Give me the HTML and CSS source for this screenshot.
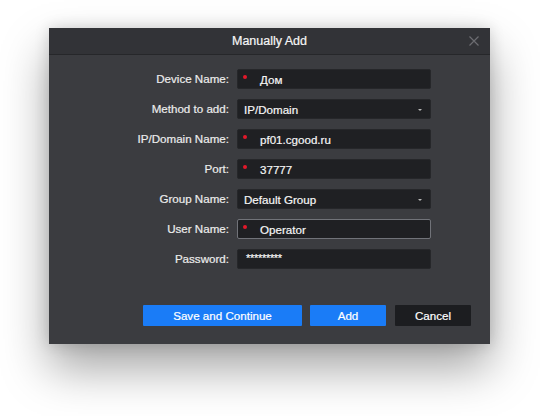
FILE: index.html
```html
<!DOCTYPE html>
<html>
<head>
<meta charset="utf-8">
<link rel="stylesheet" href="styles.css">
</head>
<body>
<div class="stage">
  <div class="dialog">
    <div class="header">
      <span class="title">Manually Add</span>
      <svg class="close" width="10" height="10" viewBox="0 0 10 10"><path d="M0.5 0.5L9.5 9.5M9.5 0.5L0.5 9.5" stroke="#6c6d71" stroke-width="1.2"/></svg>
    </div>
    <div class="form">
      <label class="lbl">Device Name:</label>
      <div class="field"><span class="req"></span><span class="val">Дом</span></div>
      <label class="lbl">Method to add:</label>
      <div class="field select"><span class="val plain">IP/Domain</span><span class="arrow"></span></div>
      <label class="lbl">IP/Domain Name:</label>
      <div class="field"><span class="req"></span><span class="val">pf01.cgood.ru</span></div>
      <label class="lbl">Port:</label>
      <div class="field"><span class="req"></span><span class="val">37777</span></div>
      <label class="lbl">Group Name:</label>
      <div class="field select"><span class="val plain">Default Group</span><span class="arrow"></span></div>
      <label class="lbl">User Name:</label>
      <div class="field focus"><span class="req"></span><span class="val">Operator</span></div>
      <label class="lbl">Password:</label>
      <div class="field"><span class="val plain pw">*********</span></div>
    </div>
    <div class="buttons">
      <button class="btn primary wide">Save and Continue</button>
      <button class="btn primary">Add</button>
      <button class="btn dark">Cancel</button>
    </div>
  </div>
</div>
</body>
</html>
```
FILE: styles.css
```css
html, body {
  margin: 0;
  padding: 0;
  background: #ffffff;
  width: 540px;
  height: 416px;
  overflow: hidden;
  font-family: "Liberation Sans", Arial, sans-serif;
}
.stage {
  padding: 28px 0 0 49px;
}
.dialog {
  width: 441px;
  height: 316px;
  background: #3b3c40;
  box-shadow: 0 24px 44px rgba(0,0,0,0.36), 0 0 14px rgba(0,0,0,0.16);
  display: flex;
  flex-direction: column;
}
.header {
  height: 26px;
  background: #323337;
  border-bottom: 1px solid #26272a;
  display: flex;
  align-items: center;
  justify-content: center;
  position: relative;
}
.title {
  color: #f6f6f6;
  font-size: 12.5px;
  -webkit-text-stroke: 0.2px #f6f6f6;
}
.close {
  position: absolute;
  right: 11px;
  top: 8px;
}
.form {
  display: grid;
  grid-template-columns: 180px 194px;
  column-gap: 8px;
  row-gap: 10px;
  padding-top: 14px;
}
.lbl {
  text-align: right;
  color: #ececec;
  font-size: 11.6px;
  line-height: 20px;
  -webkit-text-stroke: 0.2px #ececec;
}
.field {
  height: 20px;
  box-sizing: border-box;
  background: #1f2023;
  border: 1px solid #26272a;
  border-radius: 2px;
  display: flex;
  align-items: center;
  position: relative;
  color: #f6f6f6;
  font-size: 11.6px;
  -webkit-text-stroke: 0.2px #f6f6f6;
}
.field.focus {
  border-color: #717379;
}
.req {
  width: 4px;
  height: 4px;
  border-radius: 50%;
  background: #e3182a;
  margin-left: 5px;
  margin-top: -5px;
  -webkit-text-stroke: 0;
}
.val {
  margin-left: 13px;
}
.val.plain {
  margin-left: 6px;
}
.pw {
  font-size: 11px;
  letter-spacing: -0.3px;
  margin-top: -3px;
  margin-left: 8px !important;
}
.arrow {
  position: absolute;
  right: 8px;
  top: 9px;
  width: 0;
  height: 0;
  border-left: 2px solid transparent;
  border-right: 2px solid transparent;
  border-top: 2px solid #b8b8b8;
}
.buttons {
  margin-top: auto;
  padding: 0 19px 18px 0;
  display: flex;
  justify-content: flex-end;
  gap: 8px;
}
.btn {
  height: 21px;
  width: 76px;
  border: none;
  border-radius: 1px;
  font-family: "Liberation Sans", Arial, sans-serif;
  font-size: 11.6px;
  color: #ffffff;
  -webkit-text-stroke: 0.2px #ffffff;
  padding: 0;
}
.btn.wide {
  width: 159px;
}
.btn.primary {
  background: #1a7cf7;
}
.btn.dark {
  background: #1c1d20;
  margin-left: 1px;
}
```
